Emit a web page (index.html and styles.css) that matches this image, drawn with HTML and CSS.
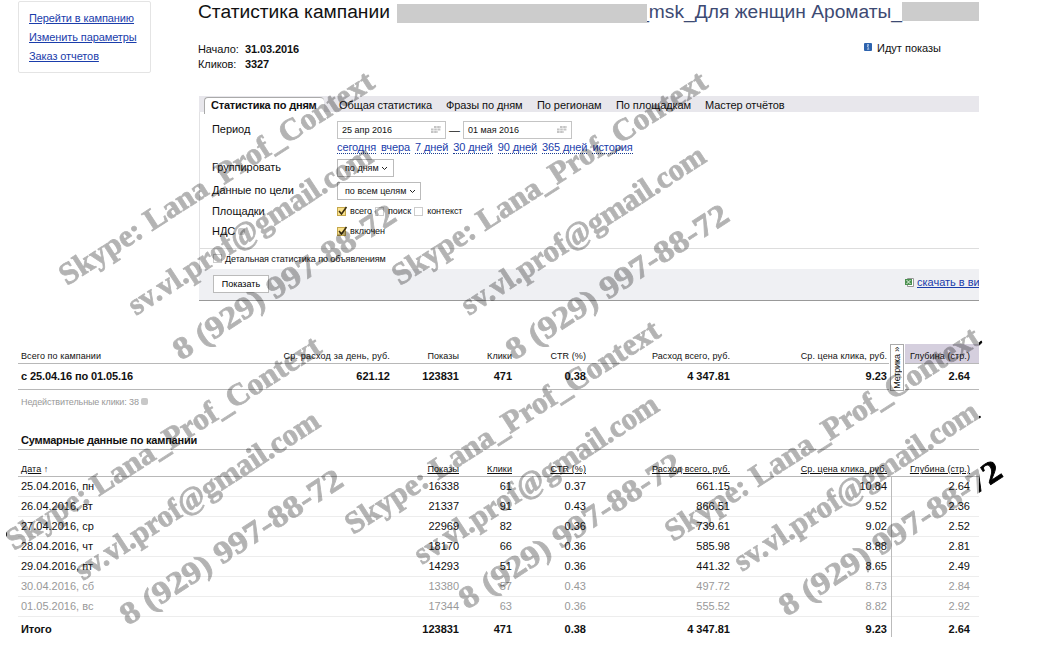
FILE: index.html
```html
<!DOCTYPE html>
<html lang="ru">
<head>
  <meta charset="UTF-8">
  <title>Статистика кампании</title>
  <link rel="stylesheet" href="styles.css">
</head>
<body>
  <div class="page">
    <div class="top">
      <div class="side-menu">
        <a href="#">Перейти в кампанию</a>
        <a href="#">Изменить параметры</a>
        <a href="#">Заказ отчетов</a>
      </div>

      <div class="main">
        <h1 class="title">
          <span class="title-text">Статистика кампании</span>
          <span class="hidden-name"></span>
          <span class="title-name">_msk_Для женщин Ароматы_</span>
          <span class="hidden-end"></span>
        </h1>

        <div class="info">
          <div class="info-list">
            <p><span>Начало:</span><b>31.03.2016</b></p>
            <p><span>Кликов:</span><b>3327</b></p>
          </div>
          <div class="status">
            <svg width="8" height="8" viewBox="0 0 8 8"><rect width="8" height="8" rx="1" fill="#2d63ae"/><path d="M3.500 1.500h1v1h-1zM3 3.500h1.200v2.500M3 6.200h2.300" stroke="#dce8f7" stroke-width=".7" fill="none"/></svg>
            <span>Идут показы</span>
          </div>
        </div>

        <div class="panel">
          <div class="tabs">
            <span class="tab active">Статистика по дням</span>
            <span class="tab tab-all">Общая статистика</span>
            <span class="tab tab-phrase">Фразы по дням</span>
            <span class="tab tab-region">По регионам</span>
            <span class="tab tab-place">По площадкам</span>
            <span class="tab">Мастер отчётов</span>
          </div>

          <div class="form">
            <div class="row row-period">
              <label>Период</label>
              <div class="date"><span>25 апр 2016</span><svg width="10" height="8" viewBox="0 0 10 8"><path d="M3 1h7M0 3.500h10M0 6h7" stroke="#c4c4c4" stroke-width="2" stroke-dasharray="2.6 .6"/></svg></div>
              <span class="dash">—</span>
              <div class="date"><span>01 мая 2016</span><svg width="10" height="8" viewBox="0 0 10 8"><path d="M3 1h7M0 3.500h10M0 6h7" stroke="#c4c4c4" stroke-width="2" stroke-dasharray="2.6 .6"/></svg></div>
            </div>
            <div class="row row-quick">
              <a href="#">сегодня</a><a href="#">вчера</a><a href="#">7 дней</a><a href="#">30 дней</a><a href="#">90 дней</a><a href="#">365 дней</a><a href="#">история</a>
            </div>
            <div class="row row-group">
              <label>Группировать</label>
              <div class="select">по дням <svg width="7" height="5" viewBox="0 0 7 5"><path d="M1 1l2.500 2.500L6 1" stroke="#222" fill="none"/></svg></div>
            </div>
            <div class="row row-goal">
              <label>Данные по цели</label>
              <div class="select select-goal">по всем целям <svg width="7" height="5" viewBox="0 0 7 5"><path d="M1 1l2.500 2.500L6 1" stroke="#222" fill="none"/></svg></div>
            </div>
            <div class="row row-place">
              <label>Площадки</label>
              <span class="check on"><svg width="12" height="11" viewBox="0 0 12 11"><path d="M3 5l2.500 3L10.500 1" stroke="#3b2f12" stroke-width="1.600" fill="none"/></svg></span><span class="check-text">всего</span>
              <span class="check"></span><span class="check-text">поиск</span>
              <span class="check"></span><span class="check-text">контекст</span>
            </div>
            <div class="row row-nds">
              <label>НДС <i class="hint"></i></label>
              <span class="check on"><svg width="12" height="11" viewBox="0 0 12 11"><path d="M3 5l2.500 3L10.500 1" stroke="#3b2f12" stroke-width="1.600" fill="none"/></svg></span><span class="check-text">включен</span>
            </div>
            <div class="detail">
              <span class="check"></span><span class="detail-text">Детальная статистика по объявлениям</span>
            </div>
          </div>

          <div class="panel-footer">
            <button class="show" type="button">Показать</button>
            <div class="download">
              <svg width="9" height="9" viewBox="0 0 9 9"><path d="M2.500 .5h6v8h-6z" fill="#fff" stroke="#999"/><rect y="1" width="7" height="6" fill="#4c9150"/><path d="M1.500 2l4 4m0-4l-4 4" stroke="#e6f3e6"/></svg>
              <a href="#">скачать в ви</a>
            </div>
          </div>
        </div>
      </div>
    </div>

    <table class="stat total-table">
      <colgroup><col class="c-date"><col class="c-day"><col class="c-shows"><col class="c-clicks"><col class="c-ctr"><col class="c-sum"><col class="c-price"><col class="c-metrika"><col class="c-depth"></colgroup>
      <tr class="head">
        <th class="first">Всего по кампании</th><th class="day">Ср. расход за день, руб.</th><th>Показы</th><th>Клики</th><th>CTR (%)</th><th>Расход всего, руб.</th><th>Ср. цена клика, руб.</th>
        <th rowspan="2" class="metrika"><div><span>Метрика »</span></div></th>
        <th class="depth">Глубина (стр.)</th>
      </tr>
      <tr class="sum">
        <td class="first">с 25.04.16 по 01.05.16</td><td>621.12</td><td>123831</td><td>471</td><td>0.38</td><td>4 347.81</td><td>9.23</td><td>2.64</td>
      </tr>
    </table>
    <p class="invalid">Недействительные клики: 38 <i class="hint"></i></p>

    <h2 class="subtitle">Суммарные данные по кампании</h2>

    <table class="stat days-table">
      <colgroup><col class="c-date"><col class="c-day"><col class="c-shows"><col class="c-clicks"><col class="c-ctr"><col class="c-sum"><col class="c-price"><col class="c-metrika"><col class="c-depth"></colgroup>
      <tr class="head">
        <th class="first"><u>Дата</u> ↑</th><th></th><th><u>Показы</u></th><th><u>Клики</u></th><th><u>CTR (%)</u></th><th><u>Расход всего, руб.</u></th><th><u>Ср. цена клика, руб.</u></th><th></th><th><u>Глубина (стр.)</u></th>
      </tr>
      <tr><td class="first">25.04.2016, пн</td><td></td><td>16338</td><td>61</td><td>0.37</td><td>661.15</td><td>10.84</td><td class="split"></td><td>2.64</td></tr>
      <tr><td class="first">26.04.2016, вт</td><td></td><td>21337</td><td>91</td><td>0.43</td><td>866.51</td><td>9.52</td><td class="split"></td><td>2.36</td></tr>
      <tr><td class="first">27.04.2016, ср</td><td></td><td>22969</td><td>82</td><td>0.36</td><td>739.61</td><td>9.02</td><td class="split"></td><td>2.52</td></tr>
      <tr><td class="first">28.04.2016, чт</td><td></td><td>18170</td><td>66</td><td>0.36</td><td>585.98</td><td>8.88</td><td class="split"></td><td>2.81</td></tr>
      <tr><td class="first">29.04.2016, пт</td><td></td><td>14293</td><td>51</td><td>0.36</td><td>441.32</td><td>8.65</td><td class="split"></td><td>2.49</td></tr>
      <tr class="weekend"><td class="first">30.04.2016, сб</td><td></td><td>13380</td><td>57</td><td>0.43</td><td>497.72</td><td>8.73</td><td class="split"></td><td>2.84</td></tr>
      <tr class="weekend"><td class="first">01.05.2016, вс</td><td></td><td>17344</td><td>63</td><td>0.36</td><td>555.52</td><td>8.82</td><td class="split"></td><td>2.92</td></tr>
      <tr class="sum"><td class="first">Итого</td><td></td><td>123831</td><td>471</td><td>0.38</td><td>4 347.81</td><td>9.23</td><td class="split"></td><td>2.64</td></tr>
    </table>
  </div>

  <!-- водяные знаки поверх страницы -->
  <svg class="watermark" width="1053" height="663" viewBox="0 0 1053 663">
    <defs>
      <clipPath id="inside"><rect x="7" width="972" height="663"/></clipPath>
      <clipPath id="outside"><path d="M0 0h7v663H0zM979 0h74v663h-74z"/></clipPath>
      <g id="mark">
        <text transform="translate(67 286) rotate(-32.800)" textLength="368" lengthAdjust="spacingAndGlyphs">Skype: Lana_Prof_Context</text>
        <text transform="translate(136 316) rotate(-33)" textLength="285" lengthAdjust="spacingAndGlyphs">sv.vl.prof@gmail.com</text>
        <text transform="translate(181 361) rotate(-33)" textLength="259" lengthAdjust="spacingAndGlyphs">8 (929) 997-88-72</text>
      </g>
      <g id="marks">
        <use href="#mark"/>
        <use href="#mark" x="333"/>
        <use href="#mark" x="-53" y="265"/>
        <use href="#mark" x="286" y="249"/>
        <use href="#mark" x="606" y="256"/>
      </g>
    </defs>
    <g clip-path="url(#inside)"><use href="#marks" class="mark-gray"/></g>
    <g clip-path="url(#outside)"><use href="#marks" class="mark-black"/></g>
  </svg>
</body>
</html>
```
FILE: styles.css
```css
body {
  margin: 0;
  width: 1053px;
  height: 663px;
  overflow: hidden;
  position: relative;
  background: #fff;
  color: #111;
  font-family: "Liberation Sans", Arial, sans-serif;
  font-size: 11px;
}
h1, h2, p {
  margin: 0;
}
a {
  color: #1a3dab;
}
.page {
  width: 979px;
  overflow: hidden;
}
.top {
  display: flex;
  height: 344px;
}
.side-menu {
  box-sizing: border-box;
  width: 133px;
  height: 72px;
  margin: 1px 47px 0 18px;
  padding: 7px 10px;
  border: 1px solid #e4e4e4;
  border-radius: 2px;
  display: flex;
  flex-direction: column;
  letter-spacing: -0.1px;
}
.side-menu a {
  line-height: 19px;
  white-space: nowrap;
}
.main {
  width: 781px;
}

/* заголовок */
.title {
  display: flex;
  height: 24px;
  font-size: 19.2px;
  font-weight: normal;
  line-height: 24px;
  white-space: nowrap;
}
.title-text {
  width: 199px;
}
.hidden-name {
  position: relative;
  z-index: 1;
  width: 250px;
  height: 19px;
  margin-top: 4px;
  background: #ccc;
}
.title-name {
  width: 265px;
  margin-left: -10px;
  text-align: right;
  color: #3d4a73;
}
.hidden-end {
  flex: 1;
  height: 19px;
  margin-top: 2px;
  background: #ccc;
}
.info {
  display: flex;
  justify-content: space-between;
  padding-top: 18px;
  height: 54px;
}
.info-list p {
  display: flex;
  line-height: 15px;
  letter-spacing: -0.1px;
}
.info-list span {
  width: 47px;
}
.status {
  display: flex;
  gap: 5px;
  width: 115px;
  line-height: 13px;
}
.status svg {
  margin-top: 1px;
}

/* панель отчета */
.panel {
  margin-left: 1px;
}
.tabs {
  display: flex;
  height: 16px;
  background: #e8e7ec;
  line-height: 18px;
  letter-spacing: -0.08px;
  white-space: nowrap;
}
.tab.active {
  box-sizing: border-box;
  width: 120px;
  height: 17px;
  margin: 1px 15px 0 5px;
  padding-left: 6px;
  border: 1px solid #aaa;
  border-width: 1px 0 0 1px;
  border-radius: 4px 4px 0 0;
  background: #fff;
  font-weight: bold;
  line-height: 15px;
  letter-spacing: -0.2px;
}
.tab-all { width: 107px; }
.tab-phrase { width: 91px; }
.tab-region { width: 79px; }
.tab-place { width: 89px; }
.form {
  border-left: 1px solid #e2e2e4;
  height: 157px;
  font-size: 9px;
}
.row {
  display: flex;
  align-items: center;
  padding-left: 12px;
}
.row label {
  width: 125px;
  font-size: 11px;
  line-height: 14px;
  letter-spacing: -0.05px;
}
.row-period { height: 36px; }
.row-period label { margin-top: -3px; }
.date {
  box-sizing: border-box;
  width: 109px;
  height: 18px;
  padding: 0 4px;
  border: 1px solid #c4c4c4;
  display: flex;
  align-items: center;
  justify-content: space-between;
}
.dash {
  width: 17px;
  text-align: center;
  font-size: 11px;
}
.row-quick {
  height: 12px;
  margin-top: -7px;
  padding: 0 0 0 137px;
  gap: 5px;
  font-size: 11px;
  line-height: 12px;
  letter-spacing: -0.1px;
}
.row-quick a {
  text-decoration: none;
  border-bottom: 1px dotted #1a3d91;
  white-space: nowrap;
}
.row-group {
  height: 18px;
  margin-top: 6px;
}
.row-group label, .row-goal label {
  margin-top: -3px;
}
.row-goal {
  height: 18px;
  margin-top: 5px;
}
.select {
  box-sizing: border-box;
  width: 57px;
  height: 18px;
  border: 1px solid #bbb;
  padding-left: 7px;
  line-height: 17px;
  white-space: nowrap;
}
.select-goal { width: 84px; }
.row-place {
  height: 14px;
  margin-top: 4px;
}
.row-nds {
  height: 14px;
  margin-top: 6px;
}
.check {
  box-sizing: border-box;
  width: 9px;
  height: 9px;
  border: 1px solid #ccc;
  background: #fff;
}
.check.on {
  border-color: #c5a84d;
  background: #fbe28b;
}
.check svg {
  display: block;
  margin: -2px;
}
.check-text {
  margin: 0 3px 0 4px;
  letter-spacing: -0.05px;
}
.hint {
  display: inline-block;
  width: 7px;
  height: 7px;
  border-radius: 2px;
  background: #c8c8c8;
}
.detail {
  display: flex;
  align-items: center;
  height: 19px;
  margin-top: 10px;
  padding-left: 13px;
  border-top: 1px solid #ddd;
}
.detail-text {
  margin-left: 3px;
  letter-spacing: -0.08px;
}
.panel-footer {
  box-sizing: border-box;
  height: 32px;
  display: flex;
  justify-content: space-between;
  padding: 6px 0 0 14px;
  background: #eff0f3;
  border-bottom: 1px solid #999;
}
.show {
  width: 56px;
  height: 18px;
  padding: 0;
  border: 1px solid #bbb;
  background: #fff;
  font: 9px "Liberation Sans", Arial, sans-serif;
}
.download {
  width: 74px;
  display: flex;
  gap: 3px;
  white-space: nowrap;
  line-height: 14px;
}
.download svg { margin-top: 3px; flex: none; }

/* таблицы */
.stat {
  width: 961px;
  margin-left: 18px;
  table-layout: fixed;
  border-collapse: separate;
  border-spacing: 0;
}
.c-date { width: 200px; }
.c-day { width: 174px; }
.c-shows { width: 69px; }
.c-clicks { width: 53px; }
.c-ctr { width: 74px; }
.c-sum { width: 144px; }
.c-price { width: 157px; }
.c-metrika { width: 16px; }
.c-depth { width: 74px; }
.stat th, .stat td {
  box-sizing: border-box;
  height: 20px;
  padding: 0 2px 1px 0;
  text-align: right;
  white-space: nowrap;
  font-size: 11px;
  line-height: 14px;
  border-bottom: 1px solid #ededed;
}
.stat th {
  padding-bottom: 0;
  font-size: 9px;
  font-weight: normal;
  letter-spacing: 0.08px;
  vertical-align: bottom;
  border-bottom: 1px solid #b8b8b8;
}
.stat .day { letter-spacing: 0.2px; }
.stat th:last-child, .stat td:last-child { padding-right: 9px; }
.stat .first {
  text-align: left;
  padding-left: 3px;
}
.stat .sum td { font-weight: bold; }
.stat .sum .first { letter-spacing: -0.1px; }
.total-table .sum td {
  height: 26px;
  padding-bottom: 2px;
  border-bottom: 1px solid #b8b8b8;
}
.stat .metrika {
  padding: 0 0 0 1px;
  border: 0;
  vertical-align: top;
}
.metrika div {
  box-sizing: border-box;
  width: 14px;
  height: 47px;
  margin-bottom: -2px;
  border: 1px solid #aaa;
  background: #fff;
  display: flex;
  align-items: center;
  justify-content: center;
}
.metrika span {
  writing-mode: vertical-rl;
  transform: rotate(180deg);
  line-height: 12px;
  letter-spacing: -0.15px;
}
.stat .depth { background: #d5cfde; }
.invalid {
  margin: 4px 0 0 21px;
  height: 16px;
  line-height: 16px;
  font-size: 9px;
  letter-spacing: -0.12px;
  color: #999;
}
.subtitle {
  margin: 22px 0 0 18px;
  padding-left: 3px;
  height: 17px;
  line-height: 16px;
  font-size: 11px;
  letter-spacing: -0.22px;
  border-bottom: 1px solid #b8b8b8;
}
.days-table th { height: 27px; }
.weekend td { color: #999; }
.days-table .split { position: relative; }
.days-table .split::before {
  content: "";
  position: absolute;
  left: 2px;
  top: 0;
  bottom: -1px;
  width: 1px;
  background: #bbb;
}
.days-table .sum td {
  height: 20px;
  border: 0;
  padding-top: 5px;
}

.watermark {
  position: absolute;
  left: 0;
  top: 0;
  pointer-events: none;
  font-family: "Liberation Serif", "Times New Roman", serif;
  font-size: 31px;
  font-weight: bold;
}
.mark-gray {
  fill: #000;
  stroke: #000;
  stroke-width: 0.8px;
  opacity: .3;
}
.mark-black {
  fill: #000;
  stroke: #000;
  stroke-width: 0.8px;
}
```
